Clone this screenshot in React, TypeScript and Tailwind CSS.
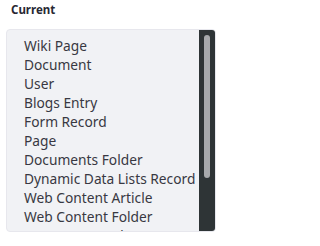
const items = [
  "Wiki Page",
  "Document",
  "User",
  "Blogs Entry",
  "Form Record",
  "Page",
  "Documents Folder",
  "Dynamic Data Lists Record",
  "Web Content Article",
  "Web Content Folder",
  "Message Boards Message",
];

export default function App() {
  return (
    <main className="w-[221px] h-[246px] bg-white px-[6px] font-['Noto_Sans',sans-serif]">
      <h4 className="ml-[5px] text-[11.5px] font-bold leading-[20px] text-[#272833]">
        Current
      </h4>
      <div className="mt-[9px] flex h-[203px] w-[210px] overflow-hidden rounded-[4px] border border-[#e7e7ed] bg-[#f1f2f5]">
        <ul className="flex-1 overflow-hidden pl-[17px] pt-[6px]">
          {items.map((item) => (
            <li
              key={item}
              className="whitespace-nowrap text-[13.75px] leading-[19px] text-[#383842]"
            >
              {item}
            </li>
          ))}
        </ul>
        <div className="flex w-[16px] shrink-0 justify-center bg-[#2e3436] pt-[5px]">
          <div className="h-[143px] w-[6px] rounded-full bg-[#a7a9ac]" />
        </div>
      </div>
    </main>
  );
}
